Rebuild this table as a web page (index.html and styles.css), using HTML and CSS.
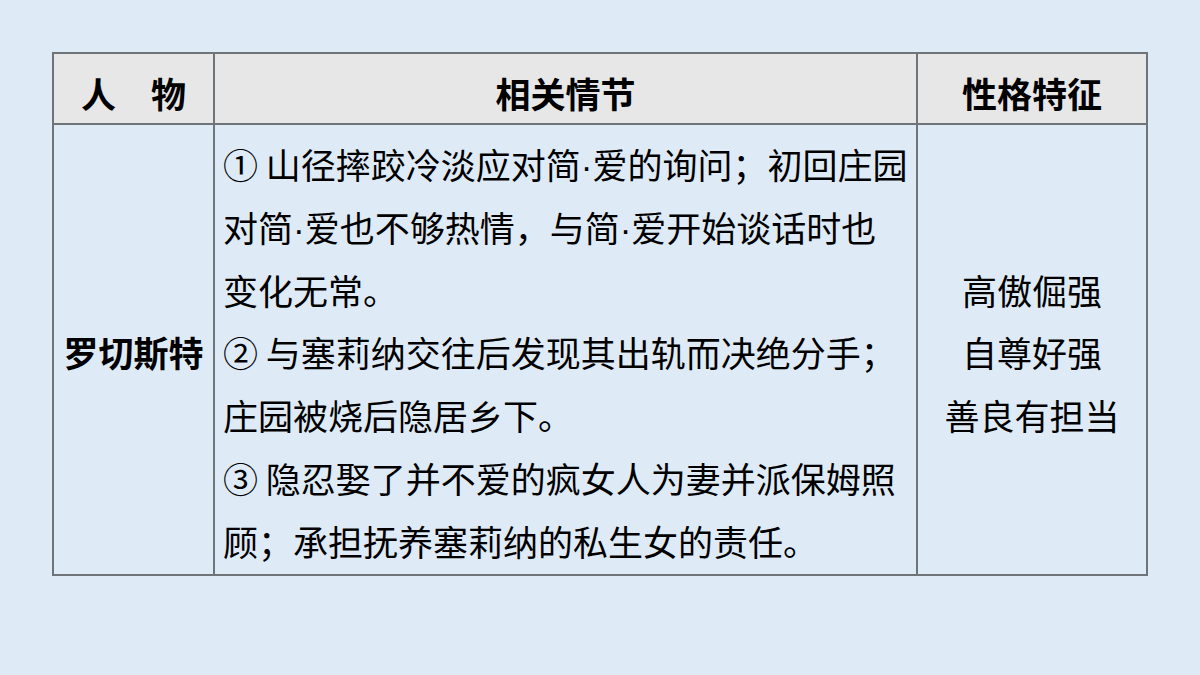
FILE: index.html
```html
<!DOCTYPE html>
<html lang="zh-CN">
<head>
<meta charset="utf-8">
<link rel="stylesheet" href="styles.css">
</head>
<body>
<table class="chart">
  <colgroup>
    <col class="c-name">
    <col class="c-plot">
    <col class="c-trait">
  </colgroup>
  <thead>
    <tr>
      <th>人　物</th>
      <th>相关情节</th>
      <th>性格特征</th>
    </tr>
  </thead>
  <tbody>
    <tr>
      <td class="name">罗切斯特</td>
      <td class="plot">① 山径摔跤冷淡应对简<span class="dot">·</span>爱的询问；初回庄园<br>对简<span class="dot">·</span>爱也不够热情，与简<span class="dot">·</span>爱开始谈话时也<br>变化无常。<br>② 与塞莉纳交往后发现其出轨而决绝分手；<br>庄园被烧后隐居乡下。<br>③ 隐忍娶了并不爱的疯女人为妻并派保姆照<br>顾；承担抚养塞莉纳的私生女的责任。</td>
      <td class="trait">高傲倔强<br>自尊好强<br>善良有担当</td>
    </tr>
  </tbody>
</table>
</body>
</html>
```

FILE: styles.css
```css
html, body {
  margin: 0;
  padding: 0;
}
body {
  background: #deebf7;
  width: 1200px;
  height: 675px;
  padding: 52px 0 0 52px;
  box-sizing: border-box;
  font-family: "Noto Sans CJK SC", "Noto Sans", sans-serif;
  color: #000;
}
.chart {
  border-collapse: collapse;
  table-layout: fixed;
  width: 1094px;
}
.c-name { width: 161px; }
.c-plot { width: 703px; }
.c-trait { width: 230px; }
.chart th,
.chart td {
  border: 2px solid #6f7479;
  font-size: 35px;
}
.chart th {
  background: #e7e7e7;
  font-weight: bold;
  line-height: 58px;
  padding: 10px 0 1px 0;
  text-align: center;
}
.chart td {
  line-height: 62.8px;
  padding: 8px 0 1px 0;
  vertical-align: middle;
}
.chart td.name {
  font-weight: bold;
  text-align: center;
}
.chart td.plot {
  padding-left: 8px;
  white-space: nowrap;
}
.chart td.trait {
  text-align: center;
}
.dot {
  font-family: "Liberation Sans", sans-serif;
  line-height: 0;
}
```
